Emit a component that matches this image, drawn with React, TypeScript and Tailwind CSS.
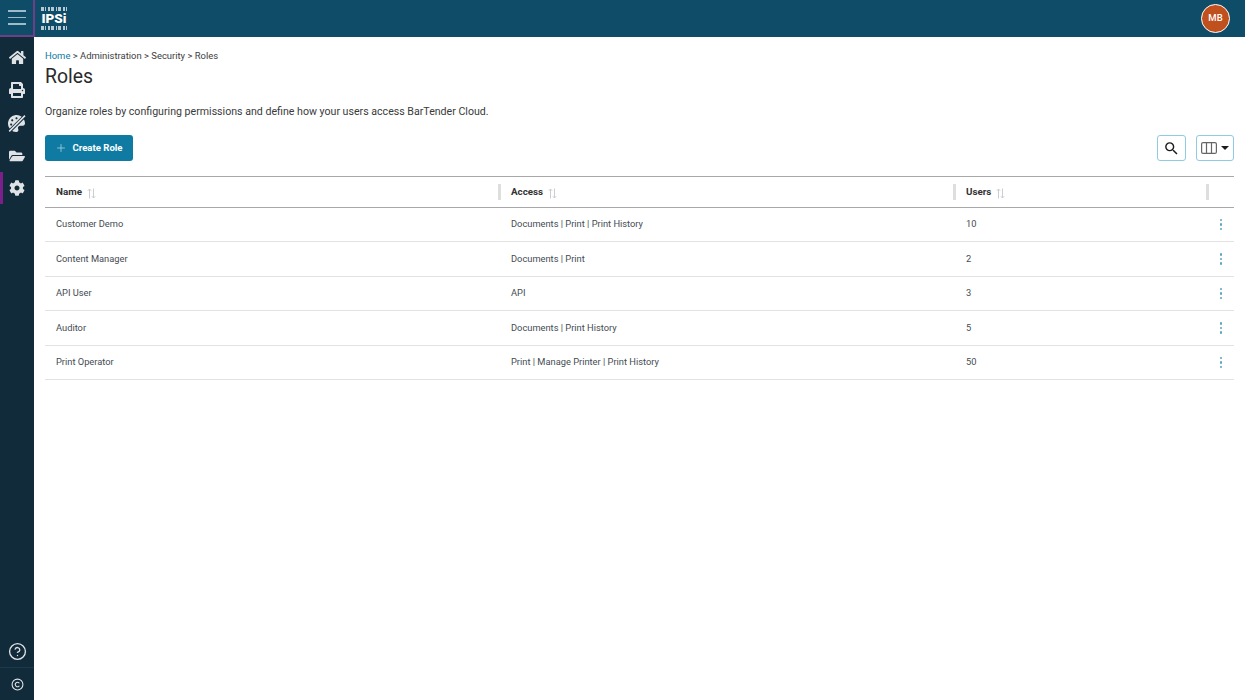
import React from 'react';
import { CircleHelp, Copyright, Plus } from 'lucide-react';
import { FaCog, FaFolderOpen, FaHome, FaPalette, FaPrint } from 'react-icons/fa';
import { MdSearch } from 'react-icons/md';

const rows = [
  { name: 'Customer Demo', access: 'Documents | Print | Print History', users: 10 },
  { name: 'Content Manager', access: 'Documents | Print', users: 2 },
  { name: 'API User', access: 'API', users: 3 },
  { name: 'Auditor', access: 'Documents | Print History', users: 5 },
  { name: 'Print Operator', access: 'Print | Manage Printer | Print History', users: 50 },
];

function Barcode() {
  const bars = [3, 1, 2, 3, 1, 3, 2, 1];
  return (
    <div className="flex h-[4px] w-full justify-between">
      {bars.map((w, i) => (
        <span key={i} className={w === 3 ? 'w-[3px] bg-white/70' : w === 2 ? 'w-[2px] bg-white/70' : 'w-[1px] bg-white/70'} />
      ))}
    </div>
  );
}

function SortIcon() {
  return (
    <svg width="9" height="11" viewBox="0 0 9 11" fill="none" stroke="#c9ced2" strokeWidth="1" className="ml-[5px] mt-[1px]">
      <path d="M2.5 10.5V1M.8 2.8 2.5 1l1.7 1.8" />
      <path d="M6.5.5V10M4.8 8.2 6.5 10l1.7-1.8" />
    </svg>
  );
}

function HeaderCell({ label, width }: { label: string; width: string }) {
  return (
    <div className={`flex items-center pt-[2px] ${width}`}>
      <span className="text-[9.8px] font-bold text-[#333]">{label}</span>
      <SortIcon />
    </div>
  );
}

function Grip() {
  return <span className="mt-[1px] h-[16px] w-[3px] bg-[#dedede]" />;
}

function PaletteOff() {
  return (
    <span className="relative block h-[17px] w-[18px]">
      <FaPalette size={17} />
      <svg width="18" height="17" viewBox="0 0 18 17" className="absolute left-0 top-0">
        <path d="M17 .8 1.5 16.2" stroke="#122b3b" strokeWidth="3.4" />
        <path d="M17 .6 1.2 16.4" stroke="#dfe3e6" strokeWidth="1.5" />
      </svg>
    </span>
  );
}

export default function App() {
  return (
    <div className="flex h-[700px] w-[1245px] flex-col overflow-hidden bg-white font-['Roboto',sans-serif] text-[#2b2b2b]">
      <header className="flex h-[36.5px] shrink-0 items-center bg-[#0f4c68] pr-[15px]">
        <div className="flex h-[36.5px] w-[35px] items-center justify-center border-b-2 border-r-2 border-[#6d3f86]">
          <div className="flex w-[18px] flex-col gap-[5px]">
            <span className="h-[1.5px] bg-[#9dbccb]" />
            <span className="h-[1.5px] bg-[#9dbccb]" />
            <span className="h-[1.5px] bg-[#9dbccb]" />
          </div>
        </div>
        <div className="ml-[6px] flex w-[26px] flex-col items-center gap-[1px] overflow-hidden">
          <Barcode />
          <span className="text-[13.5px] font-black leading-[13px] text-white">IPSi</span>
          <Barcode />
        </div>
        <div className="ml-auto flex h-[29px] w-[29px] items-center justify-center rounded-full border-[1.5px] border-white bg-[#c0511f] text-[9.5px] font-medium text-white">
          MB
        </div>
      </header>

      <div className="flex min-h-0 flex-1">
        <aside className="flex w-[34px] shrink-0 flex-col items-center bg-[#122b3b] text-[#dfe3e6]">
          <nav className="flex w-full flex-col">
            <div className="flex h-[33px] items-center justify-center pt-[8px]"><FaHome size={17} /></div>
            <div className="flex h-[33px] items-center justify-center pt-[8px]"><FaPrint size={16} /></div>
            <div className="flex h-[33px] items-center justify-center pt-[8px]"><PaletteOff /></div>
            <div className="flex h-[33px] items-center justify-center pt-[8px]"><FaFolderOpen size={16} /></div>
            <div className="mt-[3px] flex h-[32px] items-center justify-center border-l-[3px] border-[#7b1f8a] pr-[3px]"><FaCog size={16} /></div>
          </nav>
          <div className="mt-auto flex w-full flex-col items-center">
            <div className="flex h-[33px] w-full items-center justify-center border-b border-[#1c3a4d]">
              <CircleHelp size={19} strokeWidth={1.7} />
            </div>
            <div className="flex h-[32px] items-center justify-center pt-[1px]">
              <Copyright size={13} strokeWidth={2} />
            </div>
          </div>
        </aside>

        <main className="min-w-0 flex-1 pl-[11px] pr-[11px]">
          <div className="mt-[12px] text-[9.45px] leading-[13px] text-[#3d3d3d]">
            <span className="text-[#0f7ba3]">Home</span> &gt; Administration &gt; Security &gt; Roles
          </div>
          <h1 className="mt-[2.5px] text-[19.4px] font-normal leading-[26px] text-[#2b2b2b]">Roles</h1>
          <p className="mt-[15px] text-[10.62px] leading-[14px] text-[#3a3a3a]">
            Organize roles by configuring permissions and define how your users access BarTender Cloud.
          </p>

          <div className="mt-[16px] flex items-center justify-between">
            <button className="flex h-[26px] w-[88px] items-center justify-center gap-[5px] rounded-[3px] bg-[#0f7ba3] text-[9.6px] font-bold text-white">
              <Plus size={12} strokeWidth={1.4} className="text-[#b9dcea]" />
              Create Role
            </button>
            <div className="flex gap-[10px]">
              <button className="flex h-[26px] w-[29px] items-center justify-center rounded-[3px] border border-[#8fcbe3] bg-white">
                <MdSearch size={17} className="text-[#1b1b1b]" />
              </button>
              <button className="flex h-[26px] w-[38px] items-center justify-center gap-[4px] rounded-[3px] border border-[#8fcbe3] bg-white">
                <svg width="16" height="12" viewBox="0 0 16 12" fill="none" stroke="#666" strokeWidth="1.2">
                  <rect x=".6" y=".6" width="14.8" height="10.8" rx="1.5" />
                  <path d="M5.5 .5v11M10.5 .5v11" />
                </svg>
                <span className="h-0 w-0 border-x-[4px] border-t-[4px] border-x-transparent border-t-[#1b1b1b]" />
              </button>
            </div>
          </div>

          <div className="mt-[15px] border-t-[1.5px] border-[#a8a8a8]">
            <div className="flex h-[30.5px] items-center border-b-[1.5px] border-[#a8a8a8] pl-[11px]">
              <HeaderCell label="Name" width="w-[442px]" />
              <Grip />
              <div className="w-[10px]" />
              <HeaderCell label="Access" width="w-[442px]" />
              <Grip />
              <div className="w-[10px]" />
              <HeaderCell label="Users" width="w-[240px]" />
              <Grip />
            </div>
            {rows.map((row) => (
              <div key={row.name} className="flex h-[34.5px] items-center border-b border-[#e2e2e2] pl-[11px] text-[9.3px] text-[#444c53]">
                <div className="w-[455px]">{row.name}</div>
                <div className="w-[455px]">{row.access}</div>
                <div className="w-[240px]">{row.users}</div>
                <div className="ml-[4px] flex w-[22px] flex-col items-center gap-[2px]">
                  <span className="h-[2.5px] w-[2.5px] rounded-full bg-[#5aa5c0]" />
                  <span className="h-[2.5px] w-[2.5px] rounded-full bg-[#5aa5c0]" />
                  <span className="h-[2.5px] w-[2.5px] rounded-full bg-[#5aa5c0]" />
                </div>
              </div>
            ))}
          </div>
        </main>
      </div>
    </div>
  );
}
